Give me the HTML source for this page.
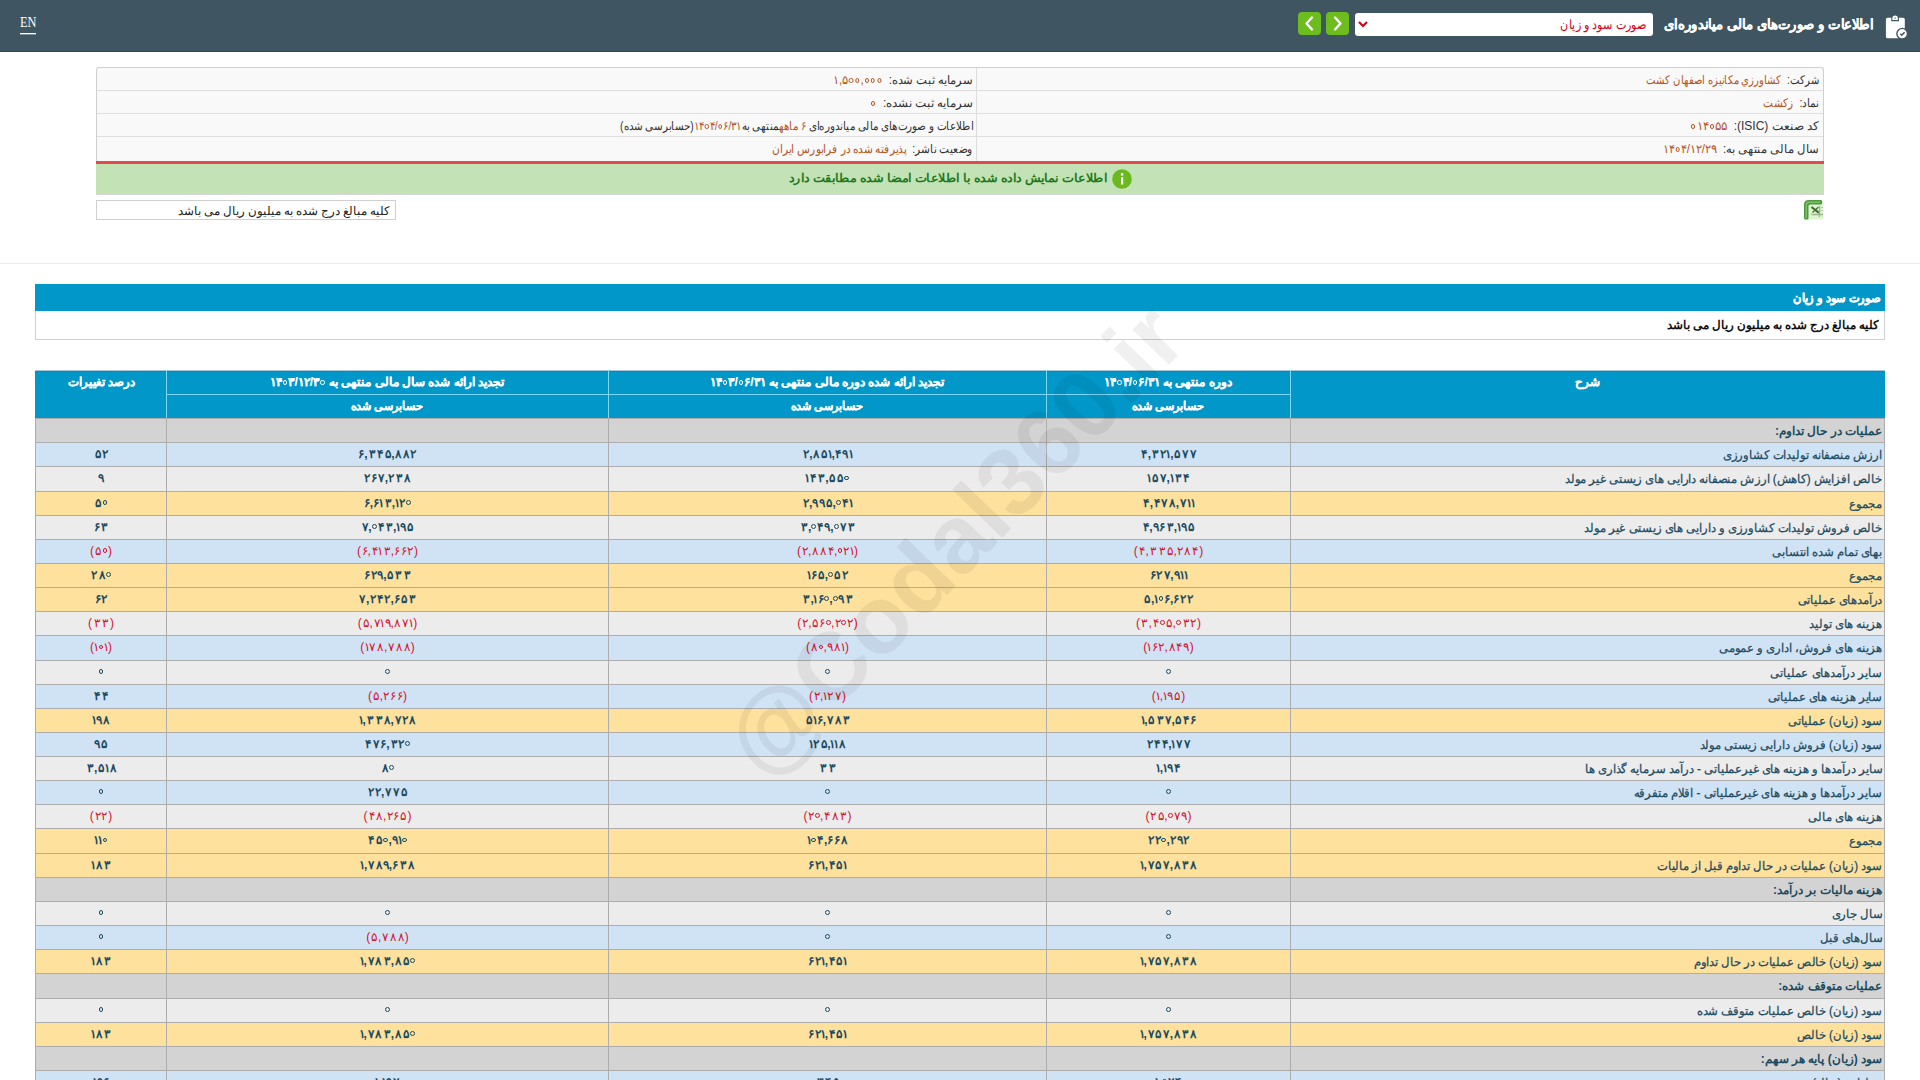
<!DOCTYPE html>
<html lang="fa" dir="ltr">
<head>
<meta charset="utf-8">
<style>
*{box-sizing:border-box;margin:0;padding:0}
html,body{width:1920px;height:1080px;overflow:hidden;background:#fff}
body{position:relative;font-family:"Liberation Sans",sans-serif;font-size:12px;color:#333}
.abs{position:absolute}
/* header */
#hdr{position:absolute;left:0;top:0;width:1920px;height:52px;background:#3f5562;border-bottom:1px solid #37474f}
#en{position:absolute;left:20px;top:14px;font-family:"Liberation Serif",serif;font-size:14px;line-height:18px;color:#fff;transform:scaleX(0.88);transform-origin:left center}
#enl{position:absolute;left:20px;top:33px;width:16px;height:1px;background:#fff;box-shadow:0 1px 0 rgba(255,255,255,0.35)}
#title{position:absolute;right:46px;transform:scaleX(0.941);transform-origin:right center;top:13px;height:22px;line-height:22px;font-size:14px;font-weight:bold;color:#fff;direction:rtl;white-space:nowrap}
#sel{position:absolute;left:1355px;top:13px;width:298px;height:23px;background:#fff;border-radius:3px}
#sel .t{position:absolute;right:6px;transform:scaleX(0.859);transform-origin:right center;top:0;line-height:23px;font-size:13px;color:#d0021b;direction:rtl;white-space:nowrap}
#sel svg{position:absolute;left:2px;top:7px}
.gbtn{position:absolute;top:12px;width:23px;height:23px;background:#6dbd1f;border-radius:4px}
.gbtn svg{position:absolute;left:0;top:0}
/* info */
#info{position:absolute;left:96px;top:67px;width:1728px;height:94px;background:#f9f9f9;border:1px solid #cfcfcf;border-bottom:none;border-radius:3px 3px 0 0}
.irow{position:absolute;left:0;width:1726px;height:23px;border-top:1px solid #dedede}
.icell{position:absolute;transform-origin:right center;top:0;height:23px;line-height:23px;direction:rtl;white-space:nowrap;font-size:12px;color:#333}
.icell .v{color:#b5541c}
#redl{position:absolute;left:96px;top:161px;width:1728px;height:3px;background:#e34b4b}
#green{position:absolute;left:96px;top:164px;width:1728px;height:31px;background:#c3e2b5;border-bottom:1px solid #d5d5d5}
#green .t{position:absolute;right:717px;top:-1px;line-height:31px;font-size:12.3px;font-weight:bold;color:#1f7a1f;direction:rtl;white-space:nowrap;transform:scaleX(1.06);transform-origin:right center}
#unit{position:absolute;left:96px;top:200px;width:300px;height:20px;border:1px solid #cfcfcf;background:#fff}
#unit .t{position:absolute;right:5px;top:1px;transform:scaleX(0.986);transform-origin:right center;line-height:19px;font-size:12px;color:#222;direction:rtl;white-space:nowrap}
#sep{position:absolute;left:0;top:263px;width:1920px;height:1px;background:#ececec}
/* title bar */
#tbar{position:absolute;left:35px;top:284px;width:1850px;height:27px;background:#0197c9}
#tbar .t{position:absolute;right:5px;transform:scaleX(0.945);transform-origin:right center;top:1px;line-height:27px;font-size:12px;font-weight:bold;color:#fff;direction:rtl;white-space:nowrap}
#tsub{position:absolute;left:35px;top:311px;width:1850px;height:29px;background:#fff;border:1px solid #cfcfcf;border-top:none}
#tsub .t{position:absolute;right:5px;top:0;transform:scaleX(0.986);transform-origin:right center;line-height:28px;font-size:12px;font-weight:bold;color:#111;direction:rtl;white-space:nowrap}
/* main table */
#thead{position:absolute;left:35px;top:370px;width:1850px;height:48px;background:#0197c9}
.hl{position:absolute;background:#7fd7f7}
.ht{position:absolute;text-align:center;color:#fff;font-weight:bold;font-size:12px;line-height:24px;direction:rtl;white-space:nowrap}
.row{position:absolute;left:35px;width:1850px;border-top:1px solid #adadad}
.row.h{background:#d3d3d3}
.row.b{background:#d0e3f5}
.row.g{background:#ececec}
.row.y{background:#fde19c}
.c{position:absolute;top:0;bottom:0;display:flex;align-items:center;justify-content:center;border-left:1px solid #adadad;white-space:nowrap;direction:rtl;font-size:12px;color:#1d4b60}
.c.d span{-webkit-text-stroke:0.25px currentColor}
.c.neg{color:#d4112b}
.c.v1,.c.v2,.c.v3,.c.p{font-weight:bold}
.c.v1.neg,.c.v2.neg,.c.v3.neg,.c.p.neg{font-weight:normal}
.n{display:inline-block;direction:ltr;unicode-bidi:isolate;white-space:nowrap;line-height:14px;transform:translateY(-1px)}
.n i{display:inline-flex;justify-content:center;align-items:flex-start;font-style:normal;vertical-align:top;height:14px}
.k0{width:5.62px}.k1{width:3.91px}.k2{width:6.95px}.k3{width:8.7px}.k4{width:7.58px}.k5{width:7.81px}.k6{width:6.47px}.k7{width:7.8px}.k9{width:6.39px}.kc{width:2.92px}.kp{width:4.52px}
.n i.k0 b{display:inline-block;width:4.8px;height:4.8px;border:1.5px solid currentColor;border-radius:50%;box-sizing:border-box;margin-top:4.6px}
.neg .n i.k0 b{border-width:1.1px}
.c.d span{display:inline-block;transform:scaleX(0.97);transform-origin:right center}
.c.p{left:0;width:131px}
.c.v3{left:131px;width:442px}
.c.v2{left:573px;width:438px}
.c.v1{left:1011px;width:244px}
.c.d{left:1255px;width:595px;justify-content:flex-start;padding-right:2px;border-right:1px solid #adadad}
.row.h .c.d{font-weight:bold}
.row.h .c.d span{-webkit-text-stroke:0;transform:scaleX(1)}
#wm{position:absolute;left:954px;top:540px;width:0;height:0;pointer-events:none}
#wm span{position:absolute;left:-500px;top:-57.6px;width:1000px;text-align:center;font-family:"Liberation Sans",sans-serif;font-weight:bold;font-size:96px;line-height:115.2px;white-space:nowrap;color:rgba(0,0,0,0.06);transform:rotate(-46deg);transform-origin:500px 57.6px}
.iso{unicode-bidi:isolate;direction:ltr}
.zr{display:inline-block;width:0.537em;text-align:center;vertical-align:baseline}
.zr b{display:inline-block;width:0.36em;height:0.36em;border:0.11em solid currentColor;border-radius:50%;box-sizing:border-box;margin-bottom:0.12em}
#tbar .t{-webkit-text-stroke:0.4px #fff}
.ht{-webkit-text-stroke:0.2px #fff}
#title{-webkit-text-stroke:0.2px #fff}
</style>
</head>
<body>
<div id="hdr">
  <div id="en">EN</div><div id="enl"></div>
  <div id="title">اطلاعات و صورت‌های مالی میاندوره‌ای</div>
  <svg class="abs" style="left:1885px;top:14px" width="26" height="26" viewBox="0 0 26 26">
    <rect x="0.9" y="3.8" width="18.9" height="20.5" rx="1.6" fill="#fff"/>
    <path d="M6.8 6.6 L6.8 4.2 A3.3 3.3 0 0 1 13.4 4.2 L13.4 6.6 Z" fill="#fff" stroke="#3f5562" stroke-width="1.1"/>
    <path d="M9.2 4.6 L10.1 3.1 L11 4.6 Z" fill="#3f5562"/>
    <circle cx="17.2" cy="19.7" r="5.3" fill="#fff" stroke="#3f5562" stroke-width="1.4"/>
    <path d="M15.3 19.8 L16.8 21.2 L19.6 18.3" fill="none" stroke="#3f5562" stroke-width="1.5"/>
  </svg>
  <div id="sel"><svg width="12" height="10" viewBox="0 0 12 10"><path d="M2 2 L6 6 L10 2" fill="none" stroke="#d0021b" stroke-width="2.2"/></svg><div class="t">صورت سود و زیان</div></div>
  <div class="gbtn" style="left:1298px"><svg width="23" height="23" viewBox="0 0 23 23"><path d="M14 5.5 L8.5 11.5 L14 17.5" fill="none" stroke="#fff" stroke-width="2.3" stroke-linecap="round" stroke-linejoin="round"/></svg></div>
  <div class="gbtn" style="left:1326px"><svg width="23" height="23" viewBox="0 0 23 23"><path d="M9 5.5 L14.5 11.5 L9 17.5" fill="none" stroke="#fff" stroke-width="2.3" stroke-linecap="round" stroke-linejoin="round"/></svg></div>
</div>

<div id="info">
  <div class="irow" style="top:-1px;border-top:none"></div>
  <div class="irow" style="top:22px"></div>
  <div class="irow" style="top:45px"></div>
  <div class="irow" style="top:68px"></div>
  <div class="abs" style="left:879px;top:0;width:1px;height:93px;background:#dedede"></div>
  <div class="icell" style="right:4px;top:1px;transform:scaleX(0.835)">شرکت:&nbsp; <span class="v">کشاورزي مكانيزه اصفهان كشت</span></div>
  <div class="icell" style="right:4px;top:24px;transform:scaleX(0.875)">نماد:&nbsp; <span class="v">زكشت</span></div>
  <div class="icell" style="right:4px;top:47px">کد صنعت (ISIC):&nbsp; <span class="v"><span class="iso"><b class="zr"><b></b></b>۱۴<b class="zr"><b></b></b>۵۵</span></span></div>
  <div class="icell" style="right:4px;top:70px;transform:scaleX(0.968)">سال مالی منتهی به:&nbsp; <span class="v"><span class="iso">۱۴<b class="zr"><b></b></b>۴/۱۲/۲۹</span></span></div>
  <div class="icell" style="right:850px;top:1px;transform:scaleX(0.964)">سرمایه ثبت شده:&nbsp; <span class="v"><span class="iso">۱,۵<b class="zr"><b></b></b><b class="zr"><b></b></b>,<b class="zr"><b></b></b><b class="zr"><b></b></b><b class="zr"><b></b></b></span></span></div>
  <div class="icell" style="right:850px;top:24px;transform:scaleX(0.99)">سرمایه ثبت نشده:&nbsp; <span class="v"><span class="iso"><b class="zr"><b></b></b></span></span></div>
  <div class="icell" style="right:850px;top:47px;transform:scaleX(0.863)">اطلاعات و صورت‌های مالی میاندوره‌ای <span class="v">۶ ماهه</span>منتهی به<span class="v"><span class="iso">۱۴<b class="zr"><b></b></b>۴/<b class="zr"><b></b></b>۶/۳۱</span></span>(حسابرسی شده)</div>
  <div class="icell" style="right:850px;top:70px;transform:scaleX(0.881)">وضعیت ناشر:&nbsp; <span class="v">پذیرفته شده در فرابورس ایران</span></div>
</div>
<div id="redl"></div>
<div id="green"><svg class="abs" style="left:1016px;top:5px" width="20" height="20" viewBox="0 0 20 20"><circle cx="10" cy="10" r="9.8" fill="#6cb81f"/><rect x="9" y="8.2" width="2.2" height="7.3" fill="#fff"/><circle cx="10.1" cy="5.4" r="1.3" fill="#fff"/></svg><div class="t" id="gtxt">اطلاعات نمایش داده شده با اطلاعات امضا شده مطابقت دارد</div></div>
<div id="unit"><div class="t">کلیه مبالغ درج شده به میلیون ریال می باشد</div></div>
<svg class="abs" style="left:1804px;top:200px" width="20" height="20" viewBox="0 0 20 20">
  <rect x="0.5" y="0.5" width="19" height="19" rx="2" fill="#dff5d2"/>
  <path d="M0 5 Q0 0 5 0 L17 0 Q18 0 18 1.5 L18 3.5 Q18 4.5 16.5 4.5 L6 4.5 Q4.5 4.5 4.5 6 L4.5 18 Q4.5 19.5 3 19.5 L1.5 19.5 Q0 19.5 0 18 Z" fill="#4e9a3c"/>
  <path d="M1.5 5 Q1.5 1.5 5 1.5 L16 1.5 L16 3 L5.5 3 Q3 3 3 5.5 L3 18 L1.5 18 Z" fill="#7cc06a"/>
  <path d="M7.5 7 L15 12.8" stroke="#3d6e33" stroke-width="2.2"/>
  <path d="M14.5 7 L8.5 12.5" stroke="#3d6e33" stroke-width="1.2"/>
  <path d="M7.5 14.5 H19 M15.5 6 V17" stroke="#9ab58f" stroke-width="1.3"/>
  <path d="M16.5 7.5 H19 M16.5 10.5 H19" stroke="#b3c9a9" stroke-width="1.2"/>
</svg>
<div id="sep"></div>

<div id="tbar"><div class="t">صورت سود و زیان</div></div>
<div id="tsub"><div class="t">کلیه مبالغ درج شده به میلیون ریال می باشد</div></div>

<div id="thead">
  <div class="abs" style="left:0;top:0;width:1850px;height:1px;background:#a8c6d3"></div>
  <div class="abs" style="left:0;top:1px;width:1850px;height:1px;background:#1185b3"></div>
  <div class="hl" style="left:131px;top:0;width:1px;height:48px"></div>
  <div class="hl" style="left:573px;top:0;width:1px;height:48px"></div>
  <div class="hl" style="left:1011px;top:0;width:1px;height:48px"></div>
  <div class="hl" style="left:1255px;top:0;width:1px;height:48px"></div>
  <div class="hl" style="left:131px;top:24px;width:1124px;height:1px"></div>
  <div class="ht" style="left:1px;width:131px;top:0;transform:scaleX(0.971)">درصد تغییرات</div>
  <div class="ht" style="left:131px;width:442px;top:0">تجدید ارائه شده سال مالی منتهی به <span class="iso">۱۴<b class="zr"><b></b></b>۳/۱۲/۳<b class="zr"><b></b></b></span></div>
  <div class="ht" style="left:573px;width:438px;top:0">تجدید ارائه شده دوره مالی منتهی به <span class="iso">۱۴<b class="zr"><b></b></b>۳/<b class="zr"><b></b></b>۶/۳۱</span></div>
  <div class="ht" style="left:1011px;width:244px;top:0">دوره منتهی به <span class="iso">۱۴<b class="zr"><b></b></b>۴/<b class="zr"><b></b></b>۶/۳۱</span></div>
  <div class="ht" style="left:1255px;width:595px;top:0">شرح</div>
  <div class="ht" style="left:131px;width:442px;top:24px"><span style="display:inline-block;transform:scaleX(0.935)">حسابرسی شده</span></div>
  <div class="ht" style="left:573px;width:438px;top:24px"><span style="display:inline-block;transform:scaleX(0.935)">حسابرسی شده</span></div>
  <div class="ht" style="left:1011px;width:244px;top:24px"><span style="display:inline-block;transform:scaleX(0.935)">حسابرسی شده</span></div>
</div>
<div class="row h" style="top:418px;height:24px"><div class="c d"><span>عملیات در حال تداوم:</span></div><div class="c v1"></div><div class="c v2"></div><div class="c v3"></div><div class="c p"></div></div>
<div class="row b" style="top:442px;height:24px"><div class="c d"><span>ارزش منصفانه تولیدات کشاورزی</span></div><div class="c v1"><span class="n"><i class="k4">۴</i><i class="kc">,</i><i class="k3">۳</i><i class="k2">۲</i><i class="k1">۱</i><i class="kc">,</i><i class="k5">۵</i><i class="k7">۷</i><i class="k7">۷</i></span></div><div class="c v2"><span class="n"><i class="k2">۲</i><i class="kc">,</i><i class="k7">۸</i><i class="k5">۵</i><i class="k1">۱</i><i class="kc">,</i><i class="k4">۴</i><i class="k9">۹</i><i class="k1">۱</i></span></div><div class="c v3"><span class="n"><i class="k6">۶</i><i class="kc">,</i><i class="k3">۳</i><i class="k4">۴</i><i class="k5">۵</i><i class="kc">,</i><i class="k7">۸</i><i class="k7">۸</i><i class="k2">۲</i></span></div><div class="c p"><span class="n"><i class="k5">۵</i><i class="k2">۲</i></span></div></div>
<div class="row g" style="top:466px;height:25px"><div class="c d"><span>خالص افزایش (کاهش) ارزش منصفانه دارایی های زیستی غیر مولد</span></div><div class="c v1"><span class="n"><i class="k1">۱</i><i class="k5">۵</i><i class="k7">۷</i><i class="kc">,</i><i class="k1">۱</i><i class="k3">۳</i><i class="k4">۴</i></span></div><div class="c v2"><span class="n"><i class="k1">۱</i><i class="k4">۴</i><i class="k3">۳</i><i class="kc">,</i><i class="k5">۵</i><i class="k5">۵</i><i class="k0"><b></b></i></span></div><div class="c v3"><span class="n"><i class="k2">۲</i><i class="k6">۶</i><i class="k7">۷</i><i class="kc">,</i><i class="k2">۲</i><i class="k3">۳</i><i class="k7">۸</i></span></div><div class="c p"><span class="n"><i class="k9">۹</i></span></div></div>
<div class="row y" style="top:491px;height:24px"><div class="c d"><span>مجموع</span></div><div class="c v1"><span class="n"><i class="k4">۴</i><i class="kc">,</i><i class="k4">۴</i><i class="k7">۷</i><i class="k7">۸</i><i class="kc">,</i><i class="k7">۷</i><i class="k1">۱</i><i class="k1">۱</i></span></div><div class="c v2"><span class="n"><i class="k2">۲</i><i class="kc">,</i><i class="k9">۹</i><i class="k9">۹</i><i class="k5">۵</i><i class="kc">,</i><i class="k0"><b></b></i><i class="k4">۴</i><i class="k1">۱</i></span></div><div class="c v3"><span class="n"><i class="k6">۶</i><i class="kc">,</i><i class="k6">۶</i><i class="k1">۱</i><i class="k3">۳</i><i class="kc">,</i><i class="k1">۱</i><i class="k2">۲</i><i class="k0"><b></b></i></span></div><div class="c p"><span class="n"><i class="k5">۵</i><i class="k0"><b></b></i></span></div></div>
<div class="row g" style="top:515px;height:24px"><div class="c d"><span>خالص فروش تولیدات کشاورزی و دارایی های زیستی غیر مولد</span></div><div class="c v1"><span class="n"><i class="k4">۴</i><i class="kc">,</i><i class="k9">۹</i><i class="k6">۶</i><i class="k3">۳</i><i class="kc">,</i><i class="k1">۱</i><i class="k9">۹</i><i class="k5">۵</i></span></div><div class="c v2"><span class="n"><i class="k3">۳</i><i class="kc">,</i><i class="k0"><b></b></i><i class="k4">۴</i><i class="k9">۹</i><i class="kc">,</i><i class="k0"><b></b></i><i class="k7">۷</i><i class="k3">۳</i></span></div><div class="c v3"><span class="n"><i class="k7">۷</i><i class="kc">,</i><i class="k0"><b></b></i><i class="k4">۴</i><i class="k3">۳</i><i class="kc">,</i><i class="k1">۱</i><i class="k9">۹</i><i class="k5">۵</i></span></div><div class="c p"><span class="n"><i class="k6">۶</i><i class="k3">۳</i></span></div></div>
<div class="row b" style="top:539px;height:24px"><div class="c d"><span>بهای تمام شده انتسابی</span></div><div class="c v1 neg"><span class="n"><i class="kp">(</i><i class="k4">۴</i><i class="kc">,</i><i class="k3">۳</i><i class="k3">۳</i><i class="k5">۵</i><i class="kc">,</i><i class="k2">۲</i><i class="k7">۸</i><i class="k4">۴</i><i class="kp">)</i></span></div><div class="c v2 neg"><span class="n"><i class="kp">(</i><i class="k2">۲</i><i class="kc">,</i><i class="k7">۸</i><i class="k7">۸</i><i class="k4">۴</i><i class="kc">,</i><i class="k0"><b></b></i><i class="k2">۲</i><i class="k1">۱</i><i class="kp">)</i></span></div><div class="c v3 neg"><span class="n"><i class="kp">(</i><i class="k6">۶</i><i class="kc">,</i><i class="k4">۴</i><i class="k1">۱</i><i class="k3">۳</i><i class="kc">,</i><i class="k6">۶</i><i class="k6">۶</i><i class="k2">۲</i><i class="kp">)</i></span></div><div class="c p neg"><span class="n"><i class="kp">(</i><i class="k5">۵</i><i class="k0"><b></b></i><i class="kp">)</i></span></div></div>
<div class="row y" style="top:563px;height:24px"><div class="c d"><span>مجموع</span></div><div class="c v1"><span class="n"><i class="k6">۶</i><i class="k2">۲</i><i class="k7">۷</i><i class="kc">,</i><i class="k9">۹</i><i class="k1">۱</i><i class="k1">۱</i></span></div><div class="c v2"><span class="n"><i class="k1">۱</i><i class="k6">۶</i><i class="k5">۵</i><i class="kc">,</i><i class="k0"><b></b></i><i class="k5">۵</i><i class="k2">۲</i></span></div><div class="c v3"><span class="n"><i class="k6">۶</i><i class="k2">۲</i><i class="k9">۹</i><i class="kc">,</i><i class="k5">۵</i><i class="k3">۳</i><i class="k3">۳</i></span></div><div class="c p"><span class="n"><i class="k2">۲</i><i class="k7">۸</i><i class="k0"><b></b></i></span></div></div>
<div class="row y" style="top:587px;height:24px"><div class="c d"><span>درآمدهای عملیاتی</span></div><div class="c v1"><span class="n"><i class="k5">۵</i><i class="kc">,</i><i class="k1">۱</i><i class="k0"><b></b></i><i class="k6">۶</i><i class="kc">,</i><i class="k6">۶</i><i class="k2">۲</i><i class="k2">۲</i></span></div><div class="c v2"><span class="n"><i class="k3">۳</i><i class="kc">,</i><i class="k1">۱</i><i class="k6">۶</i><i class="k0"><b></b></i><i class="kc">,</i><i class="k0"><b></b></i><i class="k9">۹</i><i class="k3">۳</i></span></div><div class="c v3"><span class="n"><i class="k7">۷</i><i class="kc">,</i><i class="k2">۲</i><i class="k4">۴</i><i class="k2">۲</i><i class="kc">,</i><i class="k6">۶</i><i class="k5">۵</i><i class="k3">۳</i></span></div><div class="c p"><span class="n"><i class="k6">۶</i><i class="k2">۲</i></span></div></div>
<div class="row g" style="top:611px;height:24px"><div class="c d"><span>هزینه های تولید</span></div><div class="c v1 neg"><span class="n"><i class="kp">(</i><i class="k3">۳</i><i class="kc">,</i><i class="k4">۴</i><i class="k0"><b></b></i><i class="k5">۵</i><i class="kc">,</i><i class="k0"><b></b></i><i class="k3">۳</i><i class="k2">۲</i><i class="kp">)</i></span></div><div class="c v2 neg"><span class="n"><i class="kp">(</i><i class="k2">۲</i><i class="kc">,</i><i class="k5">۵</i><i class="k6">۶</i><i class="k0"><b></b></i><i class="kc">,</i><i class="k2">۲</i><i class="k0"><b></b></i><i class="k2">۲</i><i class="kp">)</i></span></div><div class="c v3 neg"><span class="n"><i class="kp">(</i><i class="k5">۵</i><i class="kc">,</i><i class="k7">۷</i><i class="k1">۱</i><i class="k9">۹</i><i class="kc">,</i><i class="k7">۸</i><i class="k7">۷</i><i class="k1">۱</i><i class="kp">)</i></span></div><div class="c p neg"><span class="n"><i class="kp">(</i><i class="k3">۳</i><i class="k3">۳</i><i class="kp">)</i></span></div></div>
<div class="row b" style="top:635px;height:25px"><div class="c d"><span>هزینه های فروش، اداری و عمومی</span></div><div class="c v1 neg"><span class="n"><i class="kp">(</i><i class="k1">۱</i><i class="k6">۶</i><i class="k2">۲</i><i class="kc">,</i><i class="k7">۸</i><i class="k4">۴</i><i class="k9">۹</i><i class="kp">)</i></span></div><div class="c v2 neg"><span class="n"><i class="kp">(</i><i class="k7">۸</i><i class="k0"><b></b></i><i class="kc">,</i><i class="k9">۹</i><i class="k7">۸</i><i class="k1">۱</i><i class="kp">)</i></span></div><div class="c v3 neg"><span class="n"><i class="kp">(</i><i class="k1">۱</i><i class="k7">۷</i><i class="k7">۸</i><i class="kc">,</i><i class="k7">۷</i><i class="k7">۸</i><i class="k7">۸</i><i class="kp">)</i></span></div><div class="c p neg"><span class="n"><i class="kp">(</i><i class="k1">۱</i><i class="k0"><b></b></i><i class="k1">۱</i><i class="kp">)</i></span></div></div>
<div class="row g" style="top:660px;height:24px"><div class="c d"><span>سایر درآمدهای عملیاتی</span></div><div class="c v1"><span class="n"><i class="k0"><b></b></i></span></div><div class="c v2"><span class="n"><i class="k0"><b></b></i></span></div><div class="c v3"><span class="n"><i class="k0"><b></b></i></span></div><div class="c p"><span class="n"><i class="k0"><b></b></i></span></div></div>
<div class="row b" style="top:684px;height:24px"><div class="c d"><span>سایر هزینه های عملیاتی</span></div><div class="c v1 neg"><span class="n"><i class="kp">(</i><i class="k1">۱</i><i class="kc">,</i><i class="k1">۱</i><i class="k9">۹</i><i class="k5">۵</i><i class="kp">)</i></span></div><div class="c v2 neg"><span class="n"><i class="kp">(</i><i class="k2">۲</i><i class="kc">,</i><i class="k1">۱</i><i class="k2">۲</i><i class="k7">۷</i><i class="kp">)</i></span></div><div class="c v3 neg"><span class="n"><i class="kp">(</i><i class="k5">۵</i><i class="kc">,</i><i class="k2">۲</i><i class="k6">۶</i><i class="k6">۶</i><i class="kp">)</i></span></div><div class="c p"><span class="n"><i class="k4">۴</i><i class="k4">۴</i></span></div></div>
<div class="row y" style="top:708px;height:24px"><div class="c d"><span>سود (زیان) عملیاتی</span></div><div class="c v1"><span class="n"><i class="k1">۱</i><i class="kc">,</i><i class="k5">۵</i><i class="k3">۳</i><i class="k7">۷</i><i class="kc">,</i><i class="k5">۵</i><i class="k4">۴</i><i class="k6">۶</i></span></div><div class="c v2"><span class="n"><i class="k5">۵</i><i class="k1">۱</i><i class="k6">۶</i><i class="kc">,</i><i class="k7">۷</i><i class="k7">۸</i><i class="k3">۳</i></span></div><div class="c v3"><span class="n"><i class="k1">۱</i><i class="kc">,</i><i class="k3">۳</i><i class="k3">۳</i><i class="k7">۸</i><i class="kc">,</i><i class="k7">۷</i><i class="k2">۲</i><i class="k7">۸</i></span></div><div class="c p"><span class="n"><i class="k1">۱</i><i class="k9">۹</i><i class="k7">۸</i></span></div></div>
<div class="row b" style="top:732px;height:24px"><div class="c d"><span>سود (زیان) فروش دارایی زیستی مولد</span></div><div class="c v1"><span class="n"><i class="k2">۲</i><i class="k4">۴</i><i class="k4">۴</i><i class="kc">,</i><i class="k1">۱</i><i class="k7">۷</i><i class="k7">۷</i></span></div><div class="c v2"><span class="n"><i class="k1">۱</i><i class="k2">۲</i><i class="k5">۵</i><i class="kc">,</i><i class="k1">۱</i><i class="k1">۱</i><i class="k7">۸</i></span></div><div class="c v3"><span class="n"><i class="k4">۴</i><i class="k7">۷</i><i class="k6">۶</i><i class="kc">,</i><i class="k3">۳</i><i class="k2">۲</i><i class="k0"><b></b></i></span></div><div class="c p"><span class="n"><i class="k9">۹</i><i class="k5">۵</i></span></div></div>
<div class="row g" style="top:756px;height:24px"><div class="c d"><span>سایر درآمدها و هزینه های غیرعملیاتی - درآمد سرمایه گذاری ها</span></div><div class="c v1"><span class="n"><i class="k1">۱</i><i class="kc">,</i><i class="k1">۱</i><i class="k9">۹</i><i class="k4">۴</i></span></div><div class="c v2"><span class="n"><i class="k3">۳</i><i class="k3">۳</i></span></div><div class="c v3"><span class="n"><i class="k7">۸</i><i class="k0"><b></b></i></span></div><div class="c p"><span class="n"><i class="k3">۳</i><i class="kc">,</i><i class="k5">۵</i><i class="k1">۱</i><i class="k7">۸</i></span></div></div>
<div class="row b" style="top:780px;height:24px"><div class="c d"><span>سایر درآمدها و هزینه های غیرعملیاتی - اقلام متفرقه</span></div><div class="c v1"><span class="n"><i class="k0"><b></b></i></span></div><div class="c v2"><span class="n"><i class="k0"><b></b></i></span></div><div class="c v3"><span class="n"><i class="k2">۲</i><i class="k2">۲</i><i class="kc">,</i><i class="k7">۷</i><i class="k7">۷</i><i class="k5">۵</i></span></div><div class="c p"><span class="n"><i class="k0"><b></b></i></span></div></div>
<div class="row g" style="top:804px;height:24px"><div class="c d"><span>هزینه های مالی</span></div><div class="c v1 neg"><span class="n"><i class="kp">(</i><i class="k2">۲</i><i class="k5">۵</i><i class="kc">,</i><i class="k0"><b></b></i><i class="k7">۷</i><i class="k9">۹</i><i class="kp">)</i></span></div><div class="c v2 neg"><span class="n"><i class="kp">(</i><i class="k2">۲</i><i class="k0"><b></b></i><i class="kc">,</i><i class="k4">۴</i><i class="k7">۸</i><i class="k3">۳</i><i class="kp">)</i></span></div><div class="c v3 neg"><span class="n"><i class="kp">(</i><i class="k4">۴</i><i class="k7">۸</i><i class="kc">,</i><i class="k2">۲</i><i class="k6">۶</i><i class="k5">۵</i><i class="kp">)</i></span></div><div class="c p neg"><span class="n"><i class="kp">(</i><i class="k2">۲</i><i class="k2">۲</i><i class="kp">)</i></span></div></div>
<div class="row y" style="top:828px;height:25px"><div class="c d"><span>مجموع</span></div><div class="c v1"><span class="n"><i class="k2">۲</i><i class="k2">۲</i><i class="k0"><b></b></i><i class="kc">,</i><i class="k2">۲</i><i class="k9">۹</i><i class="k2">۲</i></span></div><div class="c v2"><span class="n"><i class="k1">۱</i><i class="k0"><b></b></i><i class="k4">۴</i><i class="kc">,</i><i class="k6">۶</i><i class="k6">۶</i><i class="k7">۸</i></span></div><div class="c v3"><span class="n"><i class="k4">۴</i><i class="k5">۵</i><i class="k0"><b></b></i><i class="kc">,</i><i class="k9">۹</i><i class="k1">۱</i><i class="k0"><b></b></i></span></div><div class="c p"><span class="n"><i class="k1">۱</i><i class="k1">۱</i><i class="k0"><b></b></i></span></div></div>
<div class="row y" style="top:853px;height:24px"><div class="c d"><span>سود (زیان) عملیات در حال تداوم قبل از مالیات</span></div><div class="c v1"><span class="n"><i class="k1">۱</i><i class="kc">,</i><i class="k7">۷</i><i class="k5">۵</i><i class="k7">۷</i><i class="kc">,</i><i class="k7">۸</i><i class="k3">۳</i><i class="k7">۸</i></span></div><div class="c v2"><span class="n"><i class="k6">۶</i><i class="k2">۲</i><i class="k1">۱</i><i class="kc">,</i><i class="k4">۴</i><i class="k5">۵</i><i class="k1">۱</i></span></div><div class="c v3"><span class="n"><i class="k1">۱</i><i class="kc">,</i><i class="k7">۷</i><i class="k7">۸</i><i class="k9">۹</i><i class="kc">,</i><i class="k6">۶</i><i class="k3">۳</i><i class="k7">۸</i></span></div><div class="c p"><span class="n"><i class="k1">۱</i><i class="k7">۸</i><i class="k3">۳</i></span></div></div>
<div class="row h" style="top:877px;height:24px"><div class="c d"><span>هزینه مالیات بر درآمد:</span></div><div class="c v1"></div><div class="c v2"></div><div class="c v3"></div><div class="c p"></div></div>
<div class="row g" style="top:901px;height:24px"><div class="c d"><span>سال جاری</span></div><div class="c v1"><span class="n"><i class="k0"><b></b></i></span></div><div class="c v2"><span class="n"><i class="k0"><b></b></i></span></div><div class="c v3"><span class="n"><i class="k0"><b></b></i></span></div><div class="c p"><span class="n"><i class="k0"><b></b></i></span></div></div>
<div class="row b" style="top:925px;height:24px"><div class="c d"><span>سال‌های قبل</span></div><div class="c v1"><span class="n"><i class="k0"><b></b></i></span></div><div class="c v2"><span class="n"><i class="k0"><b></b></i></span></div><div class="c v3 neg"><span class="n"><i class="kp">(</i><i class="k5">۵</i><i class="kc">,</i><i class="k7">۷</i><i class="k7">۸</i><i class="k7">۸</i><i class="kp">)</i></span></div><div class="c p"><span class="n"><i class="k0"><b></b></i></span></div></div>
<div class="row y" style="top:949px;height:24px"><div class="c d"><span>سود (زیان) خالص عملیات در حال تداوم</span></div><div class="c v1"><span class="n"><i class="k1">۱</i><i class="kc">,</i><i class="k7">۷</i><i class="k5">۵</i><i class="k7">۷</i><i class="kc">,</i><i class="k7">۸</i><i class="k3">۳</i><i class="k7">۸</i></span></div><div class="c v2"><span class="n"><i class="k6">۶</i><i class="k2">۲</i><i class="k1">۱</i><i class="kc">,</i><i class="k4">۴</i><i class="k5">۵</i><i class="k1">۱</i></span></div><div class="c v3"><span class="n"><i class="k1">۱</i><i class="kc">,</i><i class="k7">۷</i><i class="k7">۸</i><i class="k3">۳</i><i class="kc">,</i><i class="k7">۸</i><i class="k5">۵</i><i class="k0"><b></b></i></span></div><div class="c p"><span class="n"><i class="k1">۱</i><i class="k7">۸</i><i class="k3">۳</i></span></div></div>
<div class="row h" style="top:973px;height:25px"><div class="c d"><span>عملیات متوقف شده:</span></div><div class="c v1"></div><div class="c v2"></div><div class="c v3"></div><div class="c p"></div></div>
<div class="row g" style="top:998px;height:24px"><div class="c d"><span>سود (زیان) خالص عملیات متوقف شده</span></div><div class="c v1"><span class="n"><i class="k0"><b></b></i></span></div><div class="c v2"><span class="n"><i class="k0"><b></b></i></span></div><div class="c v3"><span class="n"><i class="k0"><b></b></i></span></div><div class="c p"><span class="n"><i class="k0"><b></b></i></span></div></div>
<div class="row y" style="top:1022px;height:24px"><div class="c d"><span>سود (زیان) خالص</span></div><div class="c v1"><span class="n"><i class="k1">۱</i><i class="kc">,</i><i class="k7">۷</i><i class="k5">۵</i><i class="k7">۷</i><i class="kc">,</i><i class="k7">۸</i><i class="k3">۳</i><i class="k7">۸</i></span></div><div class="c v2"><span class="n"><i class="k6">۶</i><i class="k2">۲</i><i class="k1">۱</i><i class="kc">,</i><i class="k4">۴</i><i class="k5">۵</i><i class="k1">۱</i></span></div><div class="c v3"><span class="n"><i class="k1">۱</i><i class="kc">,</i><i class="k7">۷</i><i class="k7">۸</i><i class="k3">۳</i><i class="kc">,</i><i class="k7">۸</i><i class="k5">۵</i><i class="k0"><b></b></i></span></div><div class="c p"><span class="n"><i class="k1">۱</i><i class="k7">۸</i><i class="k3">۳</i></span></div></div>
<div class="row h" style="top:1046px;height:24px"><div class="c d"><span>سود (زیان) پایه هر سهم:</span></div><div class="c v1"></div><div class="c v2"></div><div class="c v3"></div><div class="c p"></div></div>
<div class="row b" style="top:1070px;height:24px"><div class="c d"><span>عملیاتی (ریال)</span></div><div class="c v1"><span class="n"><i class="k1">۱</i><i class="kc">,</i><i class="k0"><b></b></i><i class="k2">۲</i><i class="k4">۴</i></span></div><div class="c v2"><span class="n"><i class="k3">۳</i><i class="k4">۴</i><i class="k5">۵</i></span></div><div class="c v3"><span class="n"><i class="k1">۱</i><i class="kc">,</i><i class="k1">۱</i><i class="k9">۹</i><i class="k2">۲</i></span></div><div class="c p"><span class="n"><i class="k1">۱</i><i class="k9">۹</i><i class="k6">۶</i></span></div></div>
<div id="wm"><span>@Codal360.ir</span></div>
</body>
</html>
